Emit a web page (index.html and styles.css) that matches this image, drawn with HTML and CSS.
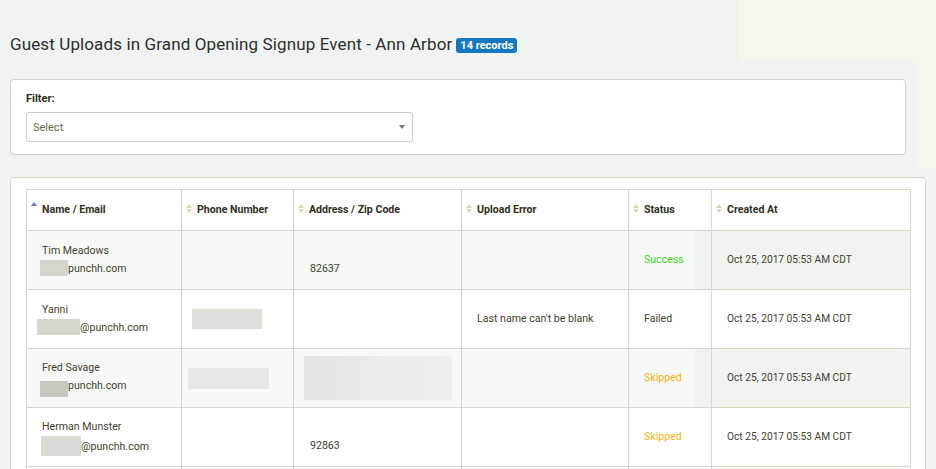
FILE: index.html
```html
<!DOCTYPE html>
<html lang="en">
<head>
<meta charset="utf-8">
<title>Guest Uploads</title>
<link rel="stylesheet" href="styles.css">
</head>
<body>
<div class="tint tint-top"></div>
<div class="tint tint-side"></div>
<main class="page">
  <h1 class="page-title">Guest Uploads in Grand Opening Signup Event - Ann Arbor <span class="badge">14 records</span></h1>

  <section class="card filter-card">
    <label class="filter-label">Filter:</label>
    <div class="select">
      <span>Select</span>
      <span class="caret"></span>
    </div>
  </section>

  <section class="card table-card">
    <table class="grid">
      <colgroup>
        <col class="c-name"><col class="c-phone"><col class="c-addr"><col class="c-err"><col class="c-status"><col class="c-created">
      </colgroup>
      <thead>
        <tr>
          <th><span class="sort sort-asc"></span>Name / Email</th>
          <th><span class="sort"></span>Phone Number</th>
          <th><span class="sort"></span>Address / Zip Code</th>
          <th><span class="sort"></span>Upload Error</th>
          <th><span class="sort"></span>Status</th>
          <th><span class="sort"></span>Created At</th>
        </tr>
      </thead>
      <tbody>
        <tr class="odd">
          <td class="name">Tim Meadows<br><span class="mask m1"></span>punchh.com</td>
          <td></td>
          <td class="addr"><br>82637</td>
          <td></td>
          <td class="st success">Success</td>
          <td class="created">Oct 25, 2017 05:53 AM CDT</td>
        </tr>
        <tr>
          <td class="name">Yanni<br><span class="mask m2"></span>@punchh.com</td>
          <td><span class="block b-phone2"></span></td>
          <td></td>
          <td class="err">Last name can't be blank</td>
          <td class="st failed">Failed</td>
          <td class="created">Oct 25, 2017 05:53 AM CDT</td>
        </tr>
        <tr class="odd">
          <td class="name">Fred Savage<br><span class="mask m3"></span>punchh.com</td>
          <td><span class="block b-phone3"></span></td>
          <td><span class="block b-addr3"></span></td>
          <td></td>
          <td class="st skipped">Skipped</td>
          <td class="created">Oct 25, 2017 05:53 AM CDT</td>
        </tr>
        <tr>
          <td class="name">Herman Munster<br><span class="mask m4"></span>@punchh.com</td>
          <td></td>
          <td class="addr"><br>92863</td>
          <td></td>
          <td class="st skipped">Skipped</td>
          <td class="created">Oct 25, 2017 05:53 AM CDT</td>
        </tr>
        <tr>
          <td class="name">&nbsp;</td><td></td><td></td><td></td><td></td><td></td>
        </tr>
      </tbody>
    </table>
  </section>
</main>
</body>
</html>
```

FILE: styles.css
```css
* { box-sizing: border-box; }

html, body {
  margin: 0;
  height: 100%;
  overflow: hidden;
}

body {
  background: #eff3f1;
  font-family: Roboto, "Liberation Sans", Arial, sans-serif;
  color: #3f3f2e;
  position: relative;
}

/* faint warm panels behind the top-right corner */
.tint {
  position: absolute;
  background: #f4f7ee;
  z-index: 0;
}
.tint-top { left: 738px; top: 0; width: 198px; height: 62px; }
.tint-side { left: 917px; top: 62px; width: 19px; height: 106px; }

.page {
  position: relative;
  z-index: 1;
  padding: 33px 10px 0 10px;
}

.page-title {
  margin: 0 0 24px 0;
  font-size: 17px;
  font-weight: 400;
  color: #2e2e2e;
  line-height: 22px;
  letter-spacing: 0.12px;
  display: flex;
  align-items: center;
  gap: 4px;
}

.badge {
  display: inline-block;
  background: #1479c2;
  color: #fff;
  font-size: 11px;
  font-weight: 700;
  line-height: 15px;
  padding: 0 4px;
  border-radius: 3px;
  letter-spacing: 0;
  position: relative;
  top: 1px;
}

.card {
  background: #fff;
  border: 1px solid #cfd1cc;
  border-radius: 4px;
}

.filter-card {
  width: 896px;
  height: 76px;
  padding: 12px 15px 0 15px;
  margin-bottom: 22px;
}

.filter-label {
  display: block;
  font-size: 11px;
  font-weight: 700;
  color: #2f2f22;
  line-height: 14px;
  margin-bottom: 6px;
}

.select {
  width: 387px;
  height: 30px;
  border: 1px solid #cccccc;
  border-radius: 3px;
  display: flex;
  align-items: center;
  justify-content: space-between;
  padding: 0 6px 0 6px;
  font-size: 11px;
  color: #6a6a4e;
}

.caret {
  width: 0;
  height: 0;
  border-left: 3px solid transparent;
  border-right: 3px solid transparent;
  border-top: 4px solid #777;
  margin-right: 1px;
}

.table-card {
  width: 916px;
  padding: 11px 15px 0 15px;
  border-color: #d8dac6;
  border-left-color: #d3d5d0;
  border-bottom: none;
  border-radius: 4px 4px 0 0;
  height: 300px;
}

.grid {
  width: 884px;
  border-collapse: collapse;
  table-layout: fixed;
  font-size: 10.6px;
}

.c-name { width: 155px; }
.c-phone { width: 112px; }
.c-addr { width: 168px; }
.c-err { width: 167px; }
.c-status { width: 83px; }
.c-created { width: 199px; }

.grid th, .grid td {
  border: 1px solid #d4d4d4;
  text-align: left;
  vertical-align: middle;
}

.grid th:nth-child(5), .grid td:nth-child(5) { border-right-color: #d8dac2; }
.grid th:nth-child(6), .grid td:nth-child(6) { border-right-color: #d8dac2; border-top-color: #d8dac2; border-bottom-color: #d8dac2; }
.grid thead th { border-top-color: #d4d4d4; }
.grid thead th:nth-child(6) { border-top-color: #d8dac2; }

.grid th {
  font-weight: 700;
  color: #2f2f22;
  padding: 0 0 0 4px;
  white-space: nowrap;
}
.grid thead tr { height: 41px; }
.grid thead th { height: 40px; padding-top: 0; padding-bottom: 1px; }

.sort {
  display: inline-block;
  width: 6px;
  height: 10px;
  margin-right: 5px;
  position: relative;
  top: 1px;
}
.sort::before, .sort::after {
  content: "";
  position: absolute;
  left: 0;
  border-left: 3px solid transparent;
  border-right: 3px solid transparent;
}
.sort::before { top: 0; border-bottom: 4px solid #d4d6bc; }
.sort::after { top: 5px; border-top: 4px solid #d4d6bc; }

.sort-asc { top: -1px; }
.sort-asc::before { border-bottom-color: #7a70c9; }
.sort-asc::after { display: none; }

.grid td {
  height: 59px;
  padding: 0 0 0 15px;
  line-height: 18px;
  color: #3f3f2e;
}

.grid tr.odd td { background: #f7f9f6; }
.grid tr.odd td.created { background: #f0f4ef; }
.grid tr.odd td.st { background: linear-gradient(to right, #f7f9f6 0, #f7f9f6 65px, #f0f4ef 65px); }

.grid td.name { padding-left: 15px; }
.grid td.addr { padding-left: 16px; }
.grid td.err { padding-left: 15px; }
.grid td.st { padding-left: 15px; }
.grid td.created { padding-left: 15px; font-size: 10.2px; }

.success { color: #3dd21e !important; }
.failed { color: #3f3f2e; }
.skipped { color: #f2b40c !important; }

/* redacted values */
.mask {
  display: inline-block;
  height: 16px;
  vertical-align: -4px;
  background: #d6d6cf;
}
.m1 { width: 28px; margin-left: -2px; }
.m2 { width: 43px; margin-left: -5px; }
.m3 { width: 28px; margin-left: -2px; height: 16px; vertical-align: -8px; background: #c6c7bf; }
.m4 { width: 40px; margin-left: -1px; height: 20px; vertical-align: -6px; background: #dadad5; }

.block {
  display: block;
  background: #dfdfd9;
}
.b-phone2 { width: 70px; height: 20px; margin-left: -5px; }
.b-phone3 { width: 81px; height: 21px; margin-left: -9px; background: #e6e8e2; }
.b-addr3 { width: 148px; height: 44px; margin-left: -5px; background: linear-gradient(to right, #e4e6e1, #eef0ea); }
```
